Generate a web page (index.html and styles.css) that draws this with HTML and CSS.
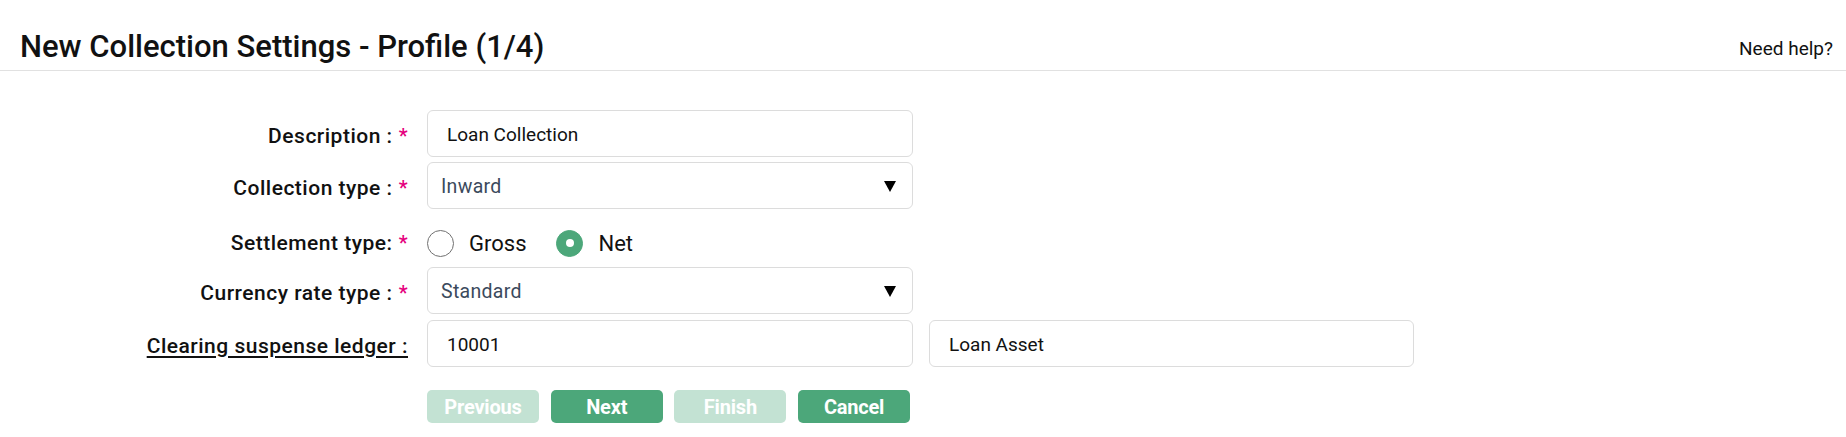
FILE: index.html
```html
<!DOCTYPE html>
<html lang="en">
<head>
<meta charset="utf-8">
<title>New Collection Settings - Profile (1/4)</title>
<link rel="stylesheet" href="styles.css">
</head>
<body>
<header class="page-header">
  <h1 class="page-title">New Collection Settings - Profile (1/4)</h1>
  <a class="help-link">Need help?</a>
</header>
<main class="form">
  <div class="form-row">
    <label class="field-label">Description :<span class="req">*</span></label>
    <input class="text-input" type="text" value="Loan Collection">
  </div>
  <div class="form-row">
    <label class="field-label">Collection type :<span class="req">*</span></label>
    <div class="select-box"><span>Inward</span><svg class="caret" width="12" height="11" viewBox="0 0 12 11"><polygon points="0,0 12,0 6,11" fill="#000"/></svg></div>
  </div>
  <div class="form-row radio-row">
    <label class="field-label">Settlement type:<span class="req">*</span></label>
    <div class="radio-group">
      <span class="radio-option"><span class="radio"></span>Gross</span>
      <span class="radio-option option-net"><span class="radio checked"></span>Net</span>
    </div>
  </div>
  <div class="form-row row-currency">
    <label class="field-label">Currency rate type :<span class="req">*</span></label>
    <div class="select-box"><span>Standard</span><svg class="caret" width="12" height="11" viewBox="0 0 12 11"><polygon points="0,0 12,0 6,11" fill="#000"/></svg></div>
  </div>
  <div class="form-row">
    <label class="field-label link-label">Clearing suspense ledger :</label>
    <input class="text-input" type="text" value="10001">
    <input class="text-input second-input" type="text" value="Loan Asset">
  </div>
  <div class="button-row">
    <button class="btn disabled">Previous</button>
    <button class="btn">Next</button>
    <button class="btn disabled">Finish</button>
    <button class="btn">Cancel</button>
  </div>
</main>
</body>
</html>
```
FILE: styles.css
```css
html, body {
  margin: 0;
  padding: 0;
  background: #fff;
}
body {
  font-family: Roboto, "Liberation Sans", Arial, sans-serif;
  color: #111;
}
.page-header {
  display: flex;
  justify-content: space-between;
  align-items: flex-end;
  height: 71px;
  box-sizing: border-box;
  border-bottom: 1px solid #e1e1e1;
  padding: 0 13px 0 20px;
}
.page-title {
  margin: 0 0 8px;
  font-size: 31px;
  line-height: 31px;
  font-weight: 500;
  color: #111;
}
.help-link {
  margin-bottom: 12px;
  font-size: 19px;
  line-height: 19px;
  color: #111;
}
.form {
  padding-top: 39px;
}
.form-row {
  display: flex;
  align-items: center;
  margin-bottom: 5px;
}
.field-label {
  width: 408px;
  margin-right: 19px;
  box-sizing: border-box;
  padding-top: 4px;
  text-align: right;
  font-size: 21px;
  font-weight: 500;
  letter-spacing: 0.5px;
  color: #111;
}
.req {
  color: #e5007d;
  margin-left: 6px;
  font-size: 20px;
}
.link-label {
  text-decoration: underline;
  text-underline-offset: 3px;
  text-decoration-thickness: 1.5px;
}
.text-input {
  width: 486px;
  height: 47px;
  box-sizing: border-box;
  border: 1px solid #dcdcdc;
  border-radius: 6px;
  padding: 2px 19px 0;
  font-family: Roboto, "Liberation Sans", Arial, sans-serif;
  font-size: 19px;
  color: #111;
  background: #fff;
  outline: none;
}
.second-input {
  margin-left: 16px;
  width: 485px;
}
.select-box {
  width: 486px;
  height: 47px;
  box-sizing: border-box;
  border: 1px solid #dcdcdc;
  border-radius: 6px;
  padding: 2px 16px 0 13px;
  display: flex;
  align-items: center;
  justify-content: space-between;
  font-size: 19.5px;
  letter-spacing: 0.3px;
  color: #3b4a5c;
}
.caret {
  display: block;
}
.radio-row {
  height: 48px;
  padding-top: 10px;
  box-sizing: border-box;
}
.radio-row .field-label {
  padding-top: 0;
}
.radio-group {
  display: flex;
  align-items: center;
}
.radio-option {
  display: flex;
  align-items: center;
  font-size: 22px;
  color: #111;
}
.option-net {
  margin-left: 30px;
}
.radio {
  width: 27px;
  height: 27px;
  box-sizing: border-box;
  border: 1px solid #707070;
  border-radius: 50%;
  margin-right: 15px;
  display: flex;
  align-items: center;
  justify-content: center;
  background: #fff;
}
.radio.checked {
  background: #4ca77a;
  border-color: #4ca77a;
}
.radio.checked::after {
  content: "";
  width: 8px;
  height: 8px;
  border-radius: 50%;
  background: #fff;
}
.row-currency {
  margin-bottom: 6px;
}
.button-row {
  display: flex;
  gap: 11.7px;
  padding-left: 427px;
  margin-top: 23px;
}
.btn {
  width: 112px;
  height: 33px;
  border: none;
  border-radius: 5px;
  background: #4ca77a;
  color: #fff;
  font-family: Roboto, "Liberation Sans", Arial, sans-serif;
  font-size: 20px;
  font-weight: 700;
  letter-spacing: -0.2px;
  padding: 0;
}
.btn.disabled {
  background: #c3e2d3;
}
```
